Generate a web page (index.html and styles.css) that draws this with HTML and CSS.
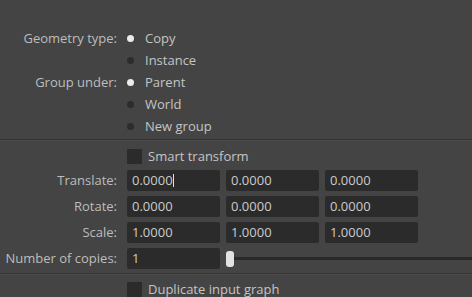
FILE: index.html
```html
<!DOCTYPE html>
<html lang="en">
<head>
  <meta charset="UTF-8">
  <title>Duplicate Special Options</title>
  <link rel="stylesheet" href="styles.css">
</head>
<body>

  <div class="panel">
    <!-- Geometry / group options -->
    <div class="section radios">
      <div class="label">Geometry type:</div>
      <div class="opt"><span class="radio on"></span>Copy</div>
      <div class="label"></div>
      <div class="opt"><span class="radio"></span>Instance</div>

      <div class="label">Group under:</div>
      <div class="opt"><span class="radio on"></span>Parent</div>
      <div class="label"></div>
      <div class="opt"><span class="radio"></span>World</div>
      <div class="label"></div>
      <div class="opt"><span class="radio"></span>New group</div>
    </div>

    <div class="sep"></div>

    <!-- Transform -->
    <div class="section fields">
      <div class="label"></div>
      <div class="opt check-row"><span class="check"></span>Smart transform</div>

      <div class="label">Translate:</div>
      <div class="triple">
        <div class="field">0.0000<span class="caret"></span></div>
        <div class="field">0.0000</div>
        <div class="field">0.0000</div>
      </div>

      <div class="label">Rotate:</div>
      <div class="triple">
        <div class="field">0.0000</div>
        <div class="field">0.0000</div>
        <div class="field">0.0000</div>
      </div>

      <div class="label">Scale:</div>
      <div class="triple">
        <div class="field">1.0000</div>
        <div class="field">1.0000</div>
        <div class="field">1.0000</div>
      </div>

      <div class="label">Number of copies:</div>
      <div class="slider-row">
        <div class="field">1</div>
        <div class="slider">
          <span class="handle"></span>
          <span class="track"></span>
        </div>
      </div>
    </div>

    <div class="sep sep2"></div>

    <div class="section last">
      <div class="label"></div>
      <div class="opt check-row"><span class="check"></span>Duplicate input graph</div>
    </div>
  </div>

</body>
</html>
```

FILE: styles.css
```css
body {
  margin: 0;
  background-color: #444444;
  font-family: "Open Sans", "Noto Sans", sans-serif;
  font-size: 13px;
  color: #c4c4c4;
  overflow: hidden;
}

.panel {
  padding-top: 27px;
}

.section {
  display: grid;
  grid-template-columns: 117px 1fr;
  column-gap: 10px;
}

.label {
  text-align: right;
  white-space: nowrap;
  color: #bdbdbd;
}

.radios .label,
.radios .opt {
  height: 22px;
  line-height: 22px;
}

.opt {
  display: flex;
  align-items: center;
  white-space: nowrap;
}

.radio {
  width: 7px;
  height: 7px;
  border-radius: 50%;
  background-color: #2c2c2c;
  margin: 0 11px 0 0;
}

.radio.on {
  background-color: #ececec;
}

/* separators */
.sep {
  margin-top: 2px;
  height: 1px;
  background-color: #333333;
  border-bottom: 1px solid #4b4b4b;
}

.sep2 {
  margin-top: 4px;
}

.check-row {
  height: 22px;
  margin-top: 4px;
}

.check {
  width: 15px;
  height: 15px;
  background-color: #2b2b2b;
  margin-right: 6px;
}

.fields {
  row-gap: 5px;
}

.fields .label {
  line-height: 21px;
}

.fields .check-row {
  margin-bottom: -2px;
}

.triple {
  display: flex;
  gap: 6px;
}

.field {
  width: 93px;
  height: 21px;
  line-height: 21px;
  padding-left: 5px;
  box-sizing: border-box;
  background-color: #2b2b2b;
  border-radius: 2px;
  color: #cccccc;
}

.caret {
  display: inline-block;
  width: 1px;
  height: 13px;
  background-color: #e0e0e0;
  vertical-align: -2px;
}

.slider-row {
  display: flex;
  align-items: center;
}

.slider {
  flex: 1;
  display: flex;
  align-items: center;
  padding-left: 6px;
}

.handle {
  width: 8px;
  height: 16px;
  border-radius: 3px;
  background-color: #e2e2e2;
}

.track {
  flex: 1;
  height: 3px;
  background-color: #2a2a2a;
}

.last .check-row {
  margin-top: 3px;
}
```
